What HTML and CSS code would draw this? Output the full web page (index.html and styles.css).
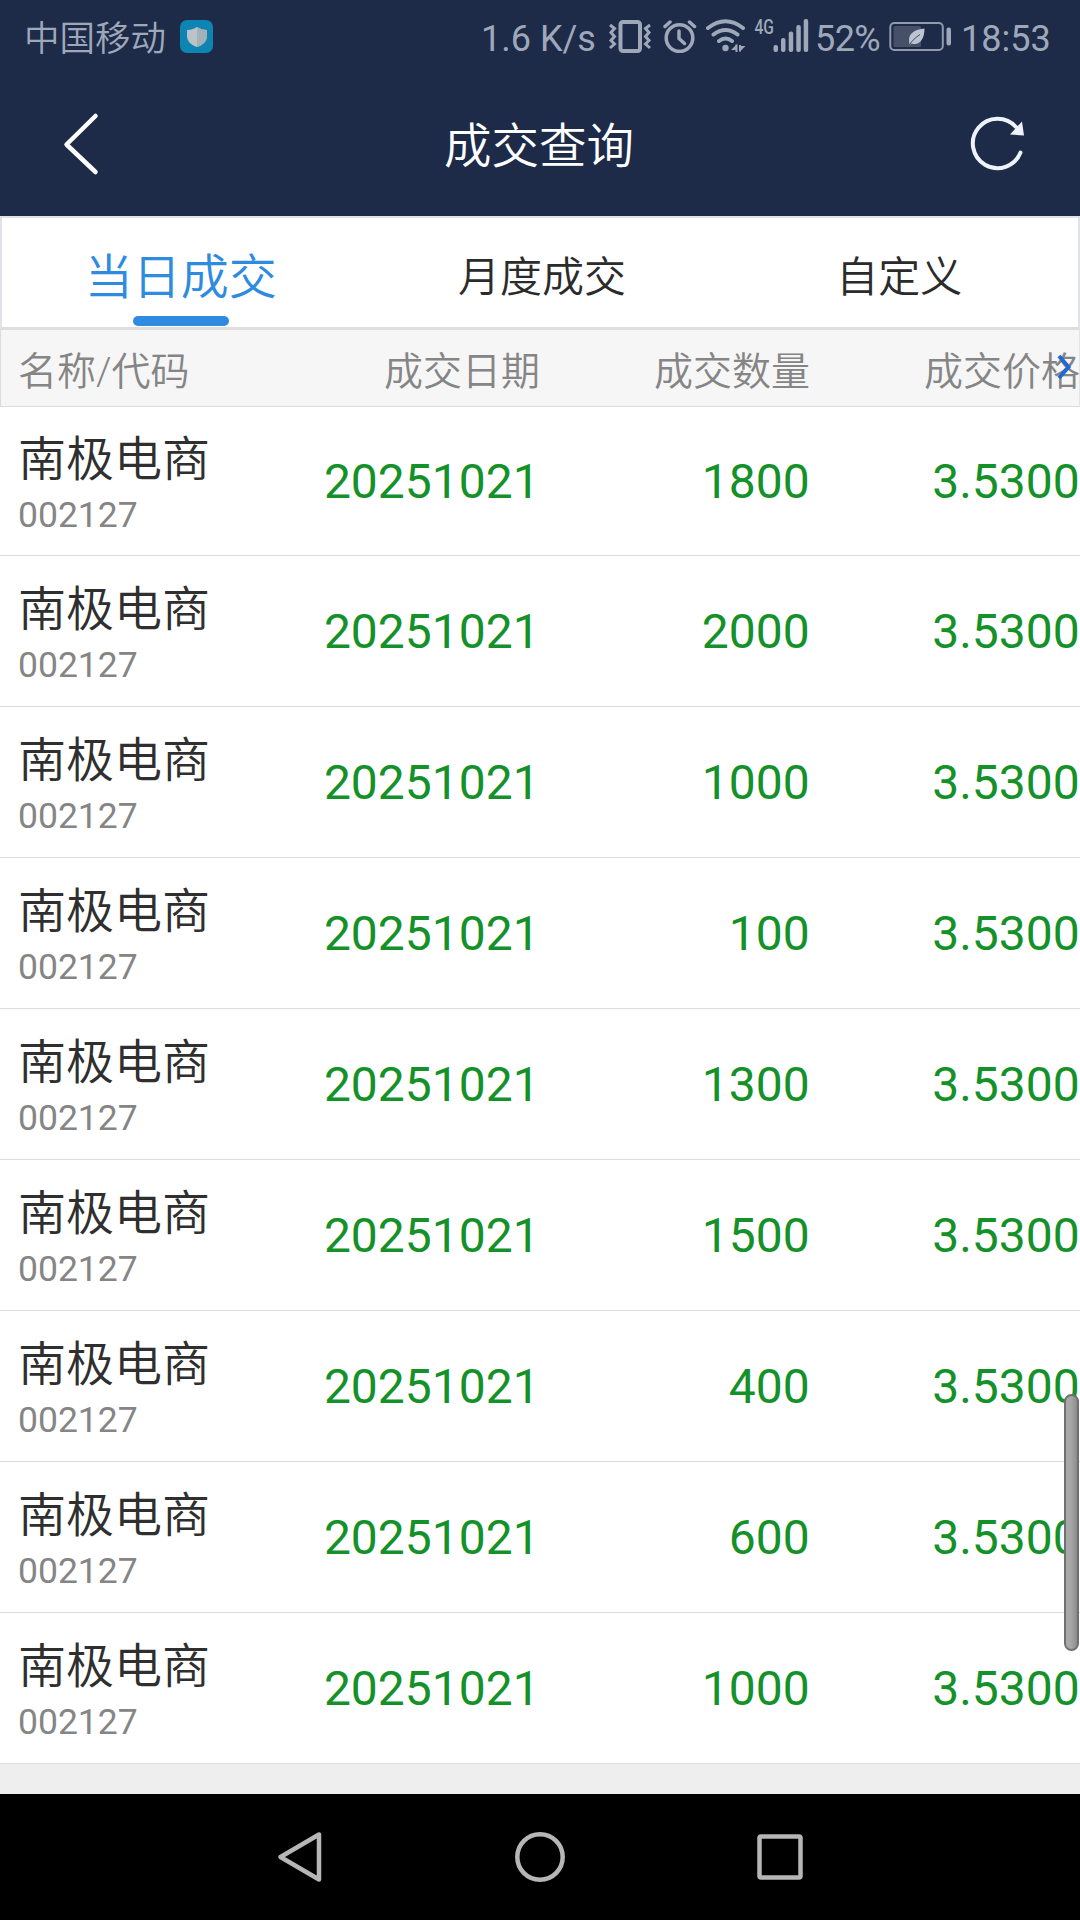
FILE: index.html
```html
<!DOCTYPE html>
<html lang="zh-CN">
<head>
<meta charset="utf-8">
<title>成交查询</title>
<link rel="stylesheet" href="styles.css">
</head>
<body>
<div class="screen">
  <div class="status">
    <span class="carrier">中国移动</span>
    <svg class="shield" width="33" height="33" viewBox="0 0 33 33"><rect width="33" height="33" rx="7" fill="#0e84b3"/><path d="M17 7c3 2 6 3 10 3v6c0 5-4 9-10 11C11 25 7 21 7 16v-6c4 0 7-1 10-3z" fill="#b9c3c9"/><path d="M17 7c3 2 6 3 10 3v6c0 5-4 9-10 11z" fill="#a3b1b9"/></svg>
    <span class="speed">1.6 K/s</span>
    <svg class="vibrate" width="44" height="36" viewBox="608 18 44 36" fill="none" stroke="#9fa8b9"><rect x="620.5" y="22" width="19.5" height="29" rx="2.5" stroke-width="4"/><path d="M610 25l4.500 3.500-3.500 4 3.500 4-3.500 4 3.500 3.500-4.500 4M650 25l-4.500 3.500 3.500 4-3.500 4 3.500 4-3.500 3.500 4.500 4" stroke-width="3"/></svg>
    <svg class="alarm" width="34" height="36" viewBox="663 18 34 36" fill="none" stroke="#9fa8b9" stroke-linecap="round"><circle cx="679.500" cy="38" r="13.300" stroke-width="3.500"/><path d="M679 31v7.500l5.500 5" stroke-width="3.500"/><path d="M665 26.500l5-4.500M694.500 26.500l-5-4.500" stroke-width="3.500"/></svg>
    <svg class="wifi" width="42" height="36" viewBox="705 18 42 36" fill="none" stroke="#9fa8b9" stroke-width="4" stroke-linecap="round"><path d="M708 28q17.500-13.500 35 0M713.500 34.500q12-9 24 0M719 41q6.500-5 13 0"/><circle cx="725.500" cy="48" r="3.200" fill="#9fa8b9" stroke="none"/><path d="M736.500 44.500v7.500M740 51.500v-6.500" stroke-width="2" stroke-linecap="butt"/><path d="M736.500 44.500l-5.500 5.500h5.500zM740 51.500l5.500-5.500h-5.500z" fill="#9fa8b9" stroke="none"/></svg>
    <svg class="signal" width="56" height="48" viewBox="754 12 56 48" fill="#9fa8b9"><text class="net" x="754.500" y="34" textLength="19.500" lengthAdjust="spacingAndGlyphs">4G</text><rect x="773.500" y="45" width="4.500" height="7" rx="2"/><rect x="781" y="38" width="4.500" height="14" rx="2"/><rect x="788.700" y="31.500" width="4.500" height="20.500" rx="2"/><rect x="796.300" y="25" width="4.500" height="27" rx="2"/><rect x="803.700" y="19" width="4.500" height="33" rx="2"/></svg>
    <span class="percent">52%</span>
    <svg class="battery" width="64" height="32" viewBox="889 20 64 32"><rect x="890.300" y="23" width="52.500" height="27" rx="4" fill="none" stroke="#8f9aae" stroke-width="2"/><rect x="893.500" y="26" width="27.500" height="21" rx="1.500" fill="#465168"/><rect x="946.500" y="27.500" width="4.500" height="18" rx="2" fill="#9fa8b9"/><path d="M924.500 28.500c-10 1-15.500 5-15.500 11.500l.5 5.500 2-2c7 2.500 13-3 13-15z" fill="#bcc4d1"/><path d="M909 45.500c3-5 6.500-8 11-11" fill="none" stroke="#465168" stroke-width="1"/></svg>
    <span class="clock">18:53</span>
  </div>
  <header class="titlebar">
    <svg width="40" height="64" viewBox="62 112 40 64" fill="none" stroke="#fff" stroke-width="4.500" stroke-linecap="round" stroke-linejoin="round"><path d="M95.500 116L66.500 144.500l29 27.500"/></svg>
    <h1 class="title">成交查询</h1>
    <svg width="60" height="60" viewBox="967 114 60 60"><path d="M1020.500 152.500A24.700 24.700 0 1 1 1016 127" fill="none" stroke="#eef2fa" stroke-width="4" stroke-linecap="round"/><path d="M1022 121.500l2 14-14-1z" fill="#eef2fa"/></svg>
  </header>
  <nav class="tabs">
    <div class="tab active"><span>当日成交</span></div>
    <div class="tab"><span>月度成交</span></div>
    <div class="tab"><span>自定义</span></div>
  </nav>
  <div class="head cols">
    <span>名称/代码</span><span class="r">成交日期</span><span class="r">成交数量</span><span class="r">成交价格</span>
    <svg class="more" width="16" height="26" viewBox="0 0 16 26" fill="none" stroke="#1f69d6" stroke-width="4"><path d="M2 2l9.500 11L2 24"/></svg>
  </div>
  <main class="list">
    <div class="row cols"><div><div class="name">南极电商</div><div class="code">002127</div></div><span class="r">20251021</span><span class="r">1800</span><span class="r">3.5300</span></div>
    <div class="row cols"><div><div class="name">南极电商</div><div class="code">002127</div></div><span class="r">20251021</span><span class="r">2000</span><span class="r">3.5300</span></div>
    <div class="row cols"><div><div class="name">南极电商</div><div class="code">002127</div></div><span class="r">20251021</span><span class="r">1000</span><span class="r">3.5300</span></div>
    <div class="row cols"><div><div class="name">南极电商</div><div class="code">002127</div></div><span class="r">20251021</span><span class="r">100</span><span class="r">3.5300</span></div>
    <div class="row cols"><div><div class="name">南极电商</div><div class="code">002127</div></div><span class="r">20251021</span><span class="r">1300</span><span class="r">3.5300</span></div>
    <div class="row cols"><div><div class="name">南极电商</div><div class="code">002127</div></div><span class="r">20251021</span><span class="r">1500</span><span class="r">3.5300</span></div>
    <div class="row cols"><div><div class="name">南极电商</div><div class="code">002127</div></div><span class="r">20251021</span><span class="r">400</span><span class="r">3.5300</span></div>
    <div class="row cols"><div><div class="name">南极电商</div><div class="code">002127</div></div><span class="r">20251021</span><span class="r">600</span><span class="r">3.5300</span></div>
    <div class="row cols"><div><div class="name">南极电商</div><div class="code">002127</div></div><span class="r">20251021</span><span class="r">1000</span><span class="r">3.5300</span></div>
    <div class="scrollbar"></div>
  </main>
  <footer class="navbar">
    <svg width="60" height="60" viewBox="0 0 60 60"><path d="M10.500 30L49 7.500v45z"/></svg>
    <svg width="60" height="60" viewBox="0 0 60 60"><circle cx="30" cy="30" r="22.700"/></svg>
    <svg width="60" height="60" viewBox="0 0 60 60"><rect x="9.500" y="9.500" width="41" height="41" rx="1.500"/></svg>
  </footer>
</div>
</body>
</html>
```
FILE: styles.css
```css
* { box-sizing: border-box; }
body {
  margin: 0;
  font-family: Roboto, "Noto Sans CJK SC", sans-serif;
  background: #eee;
}
.screen {
  width: 1080px;
  height: 1920px;
  display: flex;
  flex-direction: column;
  overflow: hidden;
}
svg { display: block; flex: none; }

.status {
  height: 72px;
  padding: 0 0 0 24px;
  display: flex;
  align-items: center;
  background: #1d2b49;
  color: #9fa8b9;
  font-size: 36px;
  line-height: 68px;
  white-space: nowrap;
}
.status span { padding-top: 5px; }
.carrier { width: 156px; font-size: 35.5px; font-weight: 350; }
.shield { margin-right: 268px; }
.speed { width: 127px; }
.vibrate { margin-right: 11px; }
.alarm { margin-right: 8px; }
.wifi { margin-right: 7px; }
.net { font: 500 20px Roboto, sans-serif; }
.status .percent { width: 74px; padding-left: 5px; letter-spacing: -0.6px; }
.battery { margin-left: 5px; margin-right: 8px; }
.clock { flex: 1; }

.titlebar {
  height: 144px;
  padding: 0 53px 0 62px;
  display: flex;
  align-items: center;
  background: #1d2b49;
  color: #fff;
}
.title {
  flex: 1;
  margin: 0;
  padding: 6px 0 0 9px;
  font-size: 47.5px;
  font-weight: 350;
  line-height: 60px;
  text-align: center;
}

.tabs {
  height: 114px;
  display: flex;
  background: #fff;
  border: 2px solid #e0e2e8;
  border-bottom: 3px solid #dedede;
}
.tab {
  flex: 1;
  display: flex;
  flex-direction: column;
  align-items: center;
  padding-top: 4px;
  font-size: 42px;
  font-weight: 350;
  line-height: 111px;
  color: #2b2b2b;
}
.tab.active { padding-right: 4px; font-size: 48px; color: #2e8be0; }
.tab.active::after {
  content: "";
  width: 96px;
  height: 10px;
  margin-top: -17px;
  border-radius: 5px;
  background: #2e8be0;
}

.cols {
  display: grid;
  grid-template-columns: repeat(4, 270px);
  align-items: center;
}
.cols > :first-child { padding-left: 18px; }
.r { text-align: right; }
.head {
  position: relative;
  height: 77px;
  padding-bottom: 2px;
  background: #f6f6f6;
  box-shadow: inset 1px -1px #dcdcdc, inset -1px 0 #e4e4e4;
  color: #858585;
  font-size: 39px;
  font-weight: 350;
}
.more { position: absolute; right: 7px; top: 24px; }

.list { position: relative; height: 1387px; }
.row {
  height: 151px;
  background: #fff;
  border-bottom: 1px solid #dcdcdc;
  color: #15912a;
  font-size: 48px;
}
.row:first-child { height: 149px; }
.row .r { padding: 1px 0.3px 0 0; }
.name { padding-top: 11px; font-size: 48px; line-height: 58px; font-weight: 350; color: #2f2f2f; }
.code { font-size: 35.5px; line-height: 53px; color: #858585; }
.scrollbar {
  position: absolute;
  right: 1px;
  top: 987px;
  width: 15px;
  height: 257px;
  border: 2px solid #6f6f6f;
  border-radius: 8px;
  background: linear-gradient(90deg, #aaa, #a6a6a6 45%, #8c8c8c);
}

.navbar {
  flex: 1;
  padding: 0 270px;
  display: flex;
  justify-content: space-between;
  align-items: center;
  background: #000;
  fill: none;
  stroke: #b6b6b6;
  stroke-width: 4.5;
  stroke-linejoin: round;
}
```
